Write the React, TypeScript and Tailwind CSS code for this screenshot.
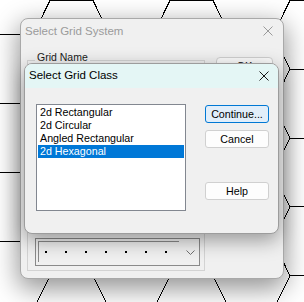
import React from 'react';

const FONT_UI = { fontFamily: '"Liberation Sans", Arial, sans-serif' };

// flat-top hex grid drawn behind the windows
function HexGrid() {
  const paths: string[] = [];
  for (let c = -2; c < 6; c++) {
    const x0 = -10 + c * 60;
    const yOff = Math.abs(c % 2) === 1 ? 0 : 34.4;
    for (let j = -1; j < 6; j++) {
      const y0 = j * 68.8 + yOff + 0.5;
      paths.push(`M${x0} ${y0} h43 l17 34.4 l-17 34.4 h-43 l-17 -34.4 Z`);
    }
  }
  return (
    <svg className="absolute inset-0" width="304" height="302" viewBox="0 0 304 302" shapeRendering="crispEdges">
      {paths.map((d, i) => (
        <path key={i} d={d} fill="none" stroke="#000" strokeWidth="1" />
      ))}
    </svg>
  );
}

function CloseX({ color, size = 10 }: { color: string; size?: number }) {
  return (
    <svg width={size} height={size} viewBox="0 0 10 10">
      <path d="M0.5 0.5 L9.5 9.5 M9.5 0.5 L0.5 9.5" stroke={color} strokeWidth="1" />
    </svg>
  );
}

function DotCombo() {
  const dots = [0, 1, 2, 3, 4, 5, 6];
  return (
    <div className="flex h-[28px] w-[165px] border border-[#8a8a8a] p-[2px]">
      <div className="flex h-[21px] w-[141px] items-center gap-[18px] border-l border-t border-[#8a8a8a] pl-[6px]">
        {dots.map((d) => (
          <span key={d} className="block h-[2px] w-[2px] bg-black" />
        ))}
      </div>
      <div className="flex flex-1 items-center justify-center pl-[5px]">
        <svg width="9" height="5" viewBox="0 0 9 5">
          <path d="M0.5 0.5 L4.5 4.5 L8.5 0.5" fill="none" stroke="#707070" strokeWidth="1" />
        </svg>
      </div>
    </div>
  );
}

function BackWindow() {
  return (
    <div className="absolute left-[20px] top-[18px] h-[261px] w-[264px] rounded-[8px] border border-[#a9a9a9] bg-[#f0f0f0] shadow-[0_8px_26px_2px_rgba(0,0,0,0.42)]">
      {/* title bar (inactive) */}
      <div className="flex h-[26px] items-center justify-between pl-[4px] pr-[10px]">
        <span className="text-[11.5px] text-[#9b9b9b]" style={FONT_UI}>
          Select Grid System
        </span>
        <span className="mb-[3px]">
          <CloseX color="#9a9a9a" />
        </span>
      </div>
      <div className="flex gap-[11px] pl-[6px] pt-[6px]">
        <fieldset className="w-[178px] border border-[#d3d3d3]">
          <legend className="ml-[7px] px-[2px] pb-[6px] text-[10.5px] leading-[13px] text-[#1a1a1a]" style={FONT_UI}>
            Grid Name
          </legend>
          <div className="pb-[4px] pl-[7px] pr-[4px] pt-[168px]">
            <DotCombo />
          </div>
        </fieldset>
        <button className="mt-[6px] h-[18px] w-[57px] rounded-[4px] border border-[#cfcfcf] bg-[#fbfbfb] text-[11px] leading-[16px] text-black" style={FONT_UI}>
          OK
        </button>
      </div>
    </div>
  );
}

const items = ['2d Rectangular', '2d Circular', 'Angled Rectangular', '2d Hexagonal'];

function FrontDialog() {
  return (
    <div className="absolute left-[24px] top-[63px] h-[171px] w-[255px] overflow-hidden rounded-[8px] border border-[#9c9c9c] bg-[#f0f0f0] shadow-[0_6px_20px_rgba(0,0,0,0.38)]" style={FONT_UI}>
      <div className="flex h-[24px] items-center justify-between bg-[#e4f6f5] pl-[4px] pr-[9px]">
        <span className="text-[11.5px] text-black">Select Grid Class</span>
        <CloseX color="#1a1a1a" />
      </div>
      <div className="flex pl-[11px] pt-[16px]">
        <ul className="h-[107px] w-[150px] border border-[#828790] bg-white p-[1px]">
          {items.map((it, i) => (
            <li
              key={it}
              className={
                i === 3
                  ? 'h-[13px] bg-[#0078d7] pl-[2px] text-[10.7px] leading-[13px] text-white'
                  : 'h-[13px] pl-[2px] text-[10.7px] leading-[13px] text-black'
              }
            >
              {it}
            </li>
          ))}
        </ul>
        <div className="ml-[19px] flex flex-col">
          <button className="mt-[1px] h-[18px] w-[64px] rounded-[3px] border border-[#0078d4] bg-[#e1eefa] text-[10.7px] leading-[16px] text-black">
            Continue...
          </button>
          <button className="mt-[7px] h-[18px] w-[64px] rounded-[3px] border border-[#d0d0d0] bg-[#fdfdfd] text-[10.7px] leading-[16px] text-black">
            Cancel
          </button>
          <button className="mt-[34px] h-[18px] w-[64px] rounded-[3px] border border-[#d0d0d0] bg-[#fdfdfd] text-[10.7px] leading-[16px] text-black">
            Help
          </button>
        </div>
      </div>
    </div>
  );
}

export default function App() {
  return (
    <div className="relative h-[302px] w-[304px] overflow-hidden bg-white">
      <HexGrid />
      <BackWindow />
      <FrontDialog />
    </div>
  );
}
